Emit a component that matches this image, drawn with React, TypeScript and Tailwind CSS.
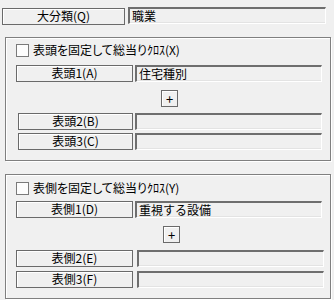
const font = { fontFamily: '"Noto Sans CJK JP", "Noto Sans", sans-serif' }

const Label = ({ text, className = "" }: { text: string; className?: string }) => (
  <div
    className={`h-[17px] pb-[1px] border border-[#6a6a6a] bg-[#f0f0f0] shadow-[inset_1px_1px_0_#ffffff] flex items-center justify-center text-[12px] leading-none text-black ${className}`}
  >
    {text}
  </div>
)

const Field = ({ value = "", className = "" }: { value?: string; className?: string }) => (
  <div
    className={`h-[17px] pb-[1px] bg-[#f0f0f0] border-t-2 border-l-2 border-t-[#6e6e6e] border-l-[#6e6e6e] border-b border-r border-b-[#ffffff] border-r-[#ffffff] shadow-[inset_0_-1px_0_#e3e3e3] flex items-center pl-[2px] text-[12px] leading-none text-black ${className}`}
  >
    {value}
  </div>
)

const Check = ({ text }: { text: string }) => (
  <div className="flex items-center h-[13px] ml-[10px]">
    <div className="w-[13px] h-[13px] border border-[#7a7a7a] bg-[#fdfdfd]" />
    <span className="ml-[4px] pb-[1px] text-[12px] leading-none text-black [font-feature-settings:'palt']">{text}</span>
  </div>
)

const Plus = () => (
  <div className="w-[17px] h-[17px] border border-[#6a6a6a] bg-[#f0f0f0] shadow-[inset_1px_1px_0_#ffffff] flex items-center justify-center text-[13px] leading-none text-black">
    +
  </div>
)

const Group = ({ children, className = "" }: { children: React.ReactNode; className?: string }) => (
  <div
    className={`ml-[5px] w-[326px] border border-[#7f7f7f] shadow-[inset_1px_1px_0_#ffffff,1px_1px_0_#ffffff] ${className}`}
  >
    {children}
  </div>
)

export default function App() {
  return (
    <div className="w-[334px] h-[300px] bg-[#f0f0f0] overflow-hidden flex flex-col" style={font}>
      {/* 大分類 */}
      <div className="flex items-start mt-[7px]">
        <Label text="大分類(Q)" className="ml-[2px] mt-[1px] w-[123px] h-[16px]" />
        <Field value="職業" className="ml-[3px] w-[198px]" />
      </div>

      {/* 表頭 */}
      <Group className="mt-[12px] h-[124px] pt-[6px]">
        <Check text="表頭を固定して総当りｸﾛｽ(X)" />
        <div className="flex mt-[8px]">
          <Label text="表頭1(A)" className="ml-[10px] w-[117px]" />
          <Field value="住宅種別" className="ml-[2px] w-[187px]" />
        </div>
        <div className="flex mt-[8px] pl-[155px]">
          <Plus />
        </div>
        <div className="flex mt-[6px]">
          <Label text="表頭2(B)" className="ml-[12px] w-[115px]" />
          <Field className="ml-[2px] w-[187px]" />
        </div>
        <div className="flex mt-[3px]">
          <Label text="表頭3(C)" className="ml-[12px] w-[115px]" />
          <Field className="ml-[2px] w-[187px]" />
        </div>
      </Group>

      {/* 表側 */}
      <Group className="mt-[13px] h-[125px] pt-[7px]">
        <Check text="表側を固定して総当りｸﾛｽ(Y)" />
        <div className="flex mt-[6px]">
          <Label text="表側1(D)" className="ml-[10px] w-[117px]" />
          <Field value="重視する設備" className="ml-[2px] w-[187px]" />
        </div>
        <div className="flex mt-[8px] pl-[157px]">
          <Plus />
        </div>
        <div className="flex mt-[7px]">
          <Label text="表側2(E)" className="ml-[10px] w-[117px]" />
          <Field className="ml-[4px] w-[187px]" />
        </div>
        <div className="flex mt-[4px]">
          <Label text="表側3(F)" className="ml-[10px] w-[117px]" />
          <Field className="ml-[4px] w-[187px]" />
        </div>
      </Group>
    </div>
  )
}
